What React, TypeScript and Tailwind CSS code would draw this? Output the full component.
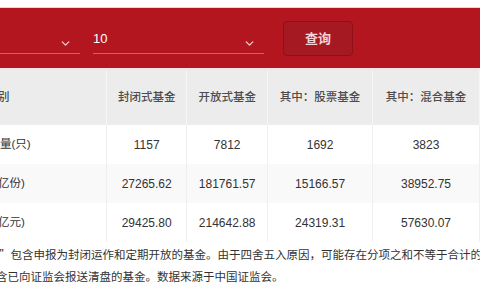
import { ChevronDown } from "lucide-react";

const HEADERS = ["类别", "封闭式基金", "开放式基金", "其中：股票基金", "其中：混合基金"];

const ROWS = [
  { label: "基金数量(只)", values: ["1157", "7812", "1692", "3823"] },
  { label: "份额(亿份)", values: ["27265.62", "181761.57", "15166.57", "38952.75"] },
  { label: "净值(亿元)", values: ["29425.80", "214642.88", "24319.31", "57630.07"] },
];

const COL_WIDTHS = ["w-[217px]", "w-[80px]", "w-[81px]", "w-[105px]", "w-[107px]"];

export default function App() {
  return (
    <div className="h-[300px] w-[480px] overflow-hidden bg-white font-['Liberation_Sans','Noto_Sans_CJK_SC',sans-serif]">
      <div className="h-[8px] border-b border-[#f1d3d6] bg-white" />

      <div className="flex h-[60px] items-start bg-[#b3161f]">
        <Select className="ml-[-90px] w-[170px]" value="" />
        <Select className="ml-[13px] w-[171px]" value="10" />
        <button
          type="button"
          className="ml-[19px] mt-[13px] h-[35px] w-[70px] rounded-[4px] border border-[#8d1118] bg-[#a51a22] text-[13px] font-bold text-[#f4d4d7]"
        >
          查询
        </button>
      </div>

      <div className="h-[2px] bg-[#f6e4e5]" />

      <div className="ml-[-110px]">
        <table className="table-fixed border-collapse">
          <thead>
            <tr className="h-[55px] bg-[#ececec]">
              {HEADERS.map((h, i) => (
                <th
                  key={h}
                  className={`${COL_WIDTHS[i]} border-r border-[#f6f6f6] p-0 text-center text-[11.5px] font-medium text-[#4d4d4d]`}
                >
                  {h}
                </th>
              ))}
            </tr>
          </thead>
          <tbody>
            {ROWS.map((r, ri) => (
              <tr key={r.label} className={ri === 1 ? "h-[39px] bg-[#f9f9f9]" : "h-[39px] bg-white"}>
                <td className="border-r border-[#efefef] p-0 text-center text-[11.5px] text-[#333]">{r.label}</td>
                {r.values.map((v, i) => (
                  <td key={i} className="border-r border-[#efefef] p-0 text-center text-[12px] text-[#333]">
                    {v}
                  </td>
                ))}
              </tr>
            ))}
          </tbody>
        </table>
      </div>

      <div className="pt-[1px] text-[11.5px] leading-[22px] text-[#333]">
        <p className="ml-[-1px] whitespace-nowrap font-['Noto_Sans_CJK_SC',sans-serif]">
          ”包含申报为封闭运作和定期开放的基金。由于四舍五入原因，可能存在分项之和不等于合计的情况。
        </p>
        <p className="ml-[-27px] whitespace-nowrap font-['Noto_Sans_CJK_SC',sans-serif]">
          不包含已向证监会报送清盘的基金。数据来源于中国证监会。
        </p>
      </div>
    </div>
  );
}

function Select({ className, value }: { className: string; value: string }) {
  return (
    <div
      className={`${className} mt-[21px] flex h-[25px] items-center justify-between border-b border-[#d75c65] pb-[4px] text-[13px] text-white`}
    >
      <span>{value}</span>
      <ChevronDown className="mr-[8px] mt-[8px] h-[13px] w-[13px] text-[#f1c9cc]" strokeWidth={2.5} />
    </div>
  );
}
